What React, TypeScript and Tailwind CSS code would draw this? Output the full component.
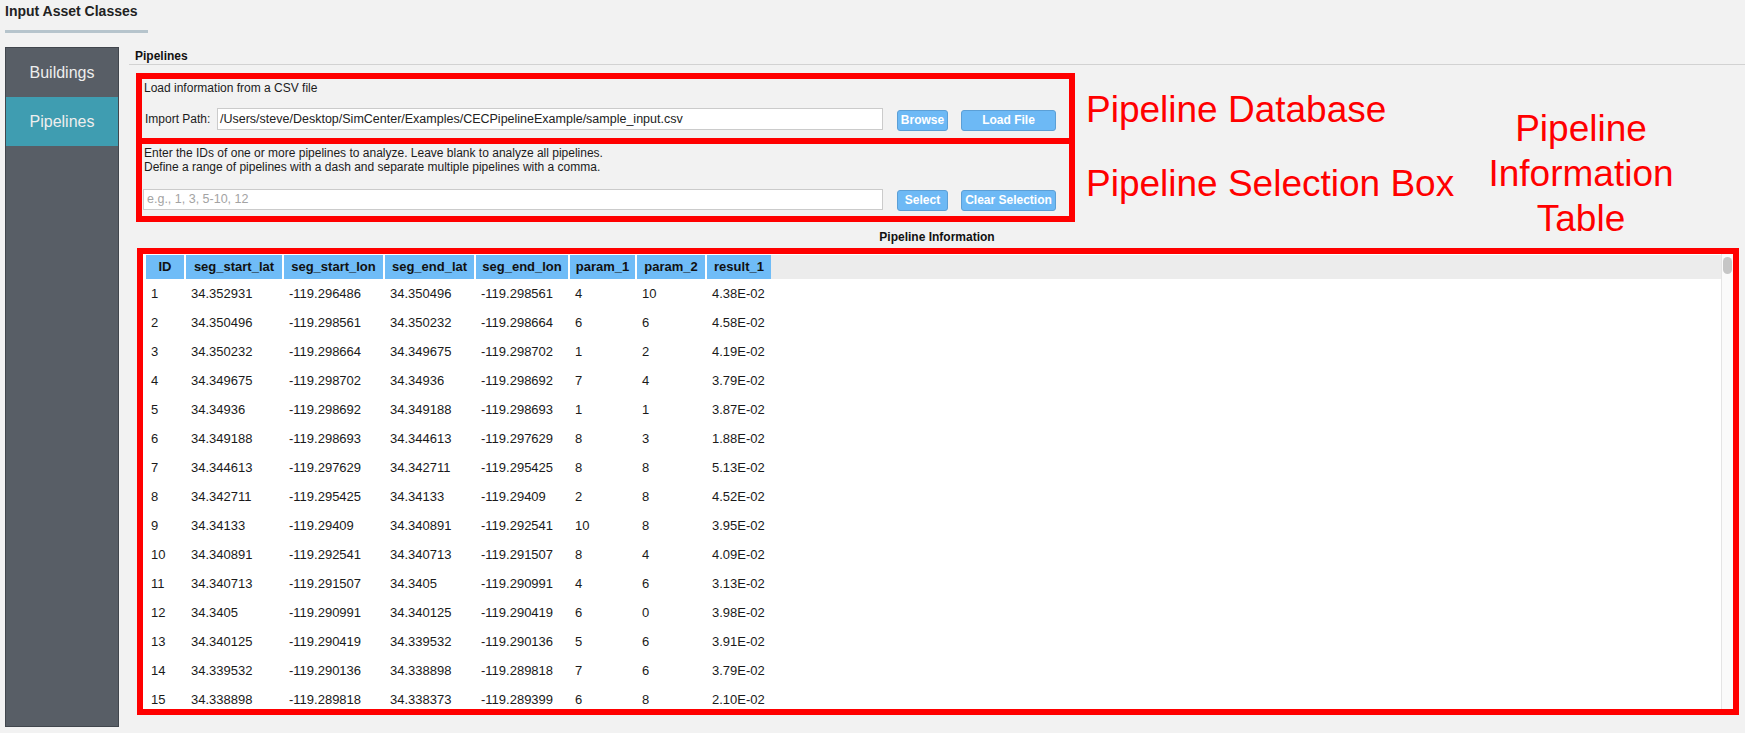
import React from "react";

type Row = [string, string, string, string, string, string, string, string];

const rows: Row[] = [
  ["1", "34.352931", "-119.296486", "34.350496", "-119.298561", "4", "10", "4.38E-02"],
  ["2", "34.350496", "-119.298561", "34.350232", "-119.298664", "6", "6", "4.58E-02"],
  ["3", "34.350232", "-119.298664", "34.349675", "-119.298702", "1", "2", "4.19E-02"],
  ["4", "34.349675", "-119.298702", "34.34936", "-119.298692", "7", "4", "3.79E-02"],
  ["5", "34.34936", "-119.298692", "34.349188", "-119.298693", "1", "1", "3.87E-02"],
  ["6", "34.349188", "-119.298693", "34.344613", "-119.297629", "8", "3", "1.88E-02"],
  ["7", "34.344613", "-119.297629", "34.342711", "-119.295425", "8", "8", "5.13E-02"],
  ["8", "34.342711", "-119.295425", "34.34133", "-119.29409", "2", "8", "4.52E-02"],
  ["9", "34.34133", "-119.29409", "34.340891", "-119.292541", "10", "8", "3.95E-02"],
  ["10", "34.340891", "-119.292541", "34.340713", "-119.291507", "8", "4", "4.09E-02"],
  ["11", "34.340713", "-119.291507", "34.3405", "-119.290991", "4", "6", "3.13E-02"],
  ["12", "34.3405", "-119.290991", "34.340125", "-119.290419", "6", "0", "3.98E-02"],
  ["13", "34.340125", "-119.290419", "34.339532", "-119.290136", "5", "6", "3.91E-02"],
  ["14", "34.339532", "-119.290136", "34.338898", "-119.289818", "7", "6", "3.79E-02"],
  ["15", "34.338898", "-119.289818", "34.338373", "-119.289399", "6", "8", "2.10E-02"],
];

const headers = [
  "ID",
  "seg_start_lat",
  "seg_start_lon",
  "seg_end_lat",
  "seg_end_lon",
  "param_1",
  "param_2",
  "result_1",
];

// column widths, taken from the header cells
const widths = ["w-[38px]", "w-[96px]", "w-[99px]", "w-[89px]", "w-[92px]", "w-[65px]", "w-[68px]", "w-[64px]"];

const BlueButton = ({ label, width }: { label: string; width: string }) => (
  <button
    className={`${width} h-[21px] rounded-[3px] bg-[#6db9f5] border border-[#5b9fd6] text-white text-[12px] font-bold leading-none`}
  >
    {label}
  </button>
);

const SideItem = ({ label, active }: { label: string; active?: boolean }) => (
  <div
    className={`h-[49px] flex items-center justify-center text-[16px] text-[#eeeeee] ${
      active ? "bg-[#3f9db1]" : ""
    }`}
  >
    {label}
  </div>
);

export default function App() {
  return (
    <div className="w-[1745px] h-[733px] bg-[#f2f2f2] overflow-hidden font-['Liberation_Sans',Arial,sans-serif] text-[#1b1b1b]">
      <div className="pl-[5px] pt-[3px] text-[14px] leading-[17px] font-bold text-[#222]">
        Input Asset Classes
      </div>
      <div className="ml-[5px] mt-[10px] w-[143px] h-[3px] bg-[#b6c4cc]" />

      <div className="flex mt-[14px]">
        {/* sidebar */}
        <div className="ml-[5px] w-[114px] h-[680px] bg-[#585e66] border border-[#41464d]">
          <SideItem label="Buildings" />
          <SideItem label="Pipelines" active />
        </div>

        {/* content */}
        <div className="ml-[10px] flex-1 flex flex-col">
          <div className="h-[18px] pl-[6px] text-[12px] leading-[18px] font-bold text-[#111] border-b border-[#d2d2d2]">
            Pipelines
          </div>

          <div className="flex items-start h-[149px] mt-[8px]">
            <div className="ml-[7px] w-[939px] flex flex-col">
              {/* database box */}
              <div className="h-[71px] border-[6px] border-[#ff0000]">
                <div className="pl-[2px] mt-[1px] text-[12px] leading-[16px]">
                  Load information from a CSV file
                </div>
                <div className="flex items-center mt-[12px] pl-[3px] h-[22px]">
                  <span className="w-[72px] text-[12px]">Import Path:</span>
                  <div className="w-[666px] h-[22px] bg-white border border-[#cbcbcb] flex items-center pl-[2px] text-[12.5px] text-[#222]">
                    /Users/steve/Desktop/SimCenter/Examples/CECPipelineExample/sample_input.csv
                  </div>
                  <div className="ml-[14px]">
                    <BlueButton label="Browse" width="w-[51px]" />
                  </div>
                  <div className="ml-[13px]">
                    <BlueButton label="Load File" width="w-[95px]" />
                  </div>
                </div>
              </div>

              {/* selection box */}
              <div className="h-[78px] border-[6px] border-t-0 border-[#ff0000]">
                <div className="pl-[2px] pt-[2px] text-[12px] leading-[14px]">
                  <div>Enter the IDs of one or more pipelines to analyze. Leave blank to analyze all pipelines.</div>
                  <div>Define a range of pipelines with a dash and separate multiple pipelines with a comma.</div>
                </div>
                <div className="flex items-center mt-[13px] pl-[1px]">
                  <div className="w-[740px] h-[21px] bg-white border border-[#cbcbcb] flex items-center pl-[3px] text-[12.5px] text-[#a3a3a3]">
                    e.g., 1, 3, 5-10, 12
                  </div>
                  <div className="ml-[14px]">
                    <BlueButton label="Select" width="w-[51px]" />
                  </div>
                  <div className="ml-[13px]">
                    <BlueButton label="Clear Selection" width="w-[95px]" />
                  </div>
                </div>
              </div>
            </div>

            {/* annotations */}
            <div className="ml-[11px] w-[384px] text-[#ff0000] text-[37px] leading-[45px] whitespace-nowrap">
              <div className="mt-[14px]">Pipeline Database</div>
              <div className="mt-[29px]">Pipeline Selection Box</div>
            </div>
            <div className="w-[222px] mt-[33px] text-center text-[#ff0000] text-[37px] leading-[45px]">
              <div>Pipeline</div>
              <div>Information</div>
              <div>Table</div>
            </div>
          </div>

          <div className="mt-[7px] text-center text-[12px] leading-[16px] font-bold text-[#111]">
            Pipeline Information
          </div>

          {/* table */}
          <div className="ml-[8px] mt-[3px] w-[1602px] h-[467px] border-[6px] border-[#ff0000] bg-white flex">
            <div className="flex-1 pt-[1px] pl-[3px] overflow-hidden">
              <div className="flex h-[24px] bg-[#ececec]">
                <div className="flex gap-[2px] bg-white">
                  {headers.map((h, i) => (
                    <div
                      key={h}
                      className={`${widths[i]} bg-[#6fbcf7] flex items-center justify-center text-[13px] font-bold text-[#111]`}
                    >
                      {h}
                    </div>
                  ))}
                </div>
              </div>
              {rows.map((r) => (
                <div key={r[0]} className="flex gap-[2px] h-[29px] items-center text-[13px] text-[#1a1a1a]">
                  {r.map((c, i) => (
                    <div key={i} className={`${widths[i]} pl-[5px] whitespace-nowrap`}>
                      {c}
                    </div>
                  ))}
                </div>
              ))}
            </div>
            <div className="w-[12px] bg-[#fafafa] border-l border-[#e4e4e4] pt-[3px] flex justify-center">
              <div className="w-[9px] h-[17px] rounded-full bg-[#c6c6c6]" />
            </div>
          </div>
        </div>
      </div>
    </div>
  );
}
